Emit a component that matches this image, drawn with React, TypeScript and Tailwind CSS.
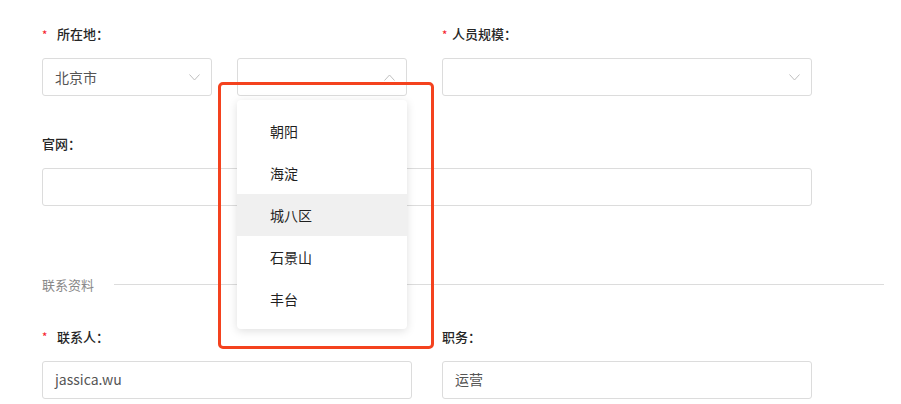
const font = { fontFamily: '"Noto Sans CJK SC", "Noto Sans", sans-serif' }

function Chevron({ up = false }: { up?: boolean }) {
  return (
    <svg width="11" height="7" viewBox="0 0 11 7" className="text-[#bfbfbf]">
      <path d={up ? 'M0.5 6.5 L5.5 1 L10.5 6.5' : 'M0.5 0.5 L5.5 6 L10.5 0.5'} fill="none" stroke="currentColor" strokeWidth="1" />
    </svg>
  )
}

function Label({ text, required = false, tight = false }: { text: string; required?: boolean; tight?: boolean }) {
  return (
    <div className="h-5 flex items-center text-[13px] font-medium text-[#262626]">
      {required && <span className={`text-[#f5222d] text-[11px] ${tight ? 'w-[10px]' : 'w-[15px]'}`}>*</span>}
      <span>{text}：</span>
    </div>
  )
}

function Select({ value, up = false, className = '' }: { value?: string; up?: boolean; className?: string }) {
  return (
    <div className={`h-[38px] border border-[#dcdcdc] rounded-[3px] bg-white flex items-center justify-between pl-3 pr-[11px] ${className}`}>
      <span className="text-[14px] text-[#555]">{value}</span>
      <Chevron up={up} />
    </div>
  )
}

function Input({ value, className = '' }: { value?: string; className?: string }) {
  return (
    <div className={`h-[38px] border border-[#dcdcdc] rounded-[3px] bg-white flex items-center px-3 text-[14px] text-[#555] ${className}`}>
      {value}
    </div>
  )
}

const districts = ['朝阳', '海淀', '城八区', '石景山', '丰台']

export default function App() {
  return (
    <div className="w-[901px] h-[404px] bg-white overflow-hidden pl-[42px] pt-6" style={font}>
      <div className="flex gap-[30px]">
        <div className="w-[370px]">
          <Label text="所在地" required />
          <div className="flex gap-[25px] mt-[14px]">
            <Select value="北京市" className="w-[170px]" />
            <div className="relative w-[170px]">
              <Select up className="w-[170px]" />
              <div className="absolute left-0 top-[42px] w-[170px] bg-white rounded-[4px] shadow-[0_2px_10px_rgba(0,0,0,0.13)] pt-[10px] pb-[9px] z-10">
                {districts.map((d) => (
                  <div key={d} className={`h-[42px] flex items-center pl-[33px] text-[14px] text-[#1f1f1f] ${d === '城八区' ? 'bg-[#f0f0f0]' : ''}`}>
                    {d}
                  </div>
                ))}
              </div>
              <div className="absolute left-[-19px] top-[24px] w-[216px] h-[267px] border-[3px] border-[#f4421e] rounded-[5px] z-20 pointer-events-none" />
            </div>
          </div>
        </div>
        <div className="w-[370px]">
          <Label text="人员规模" required tight />
          <Select className="mt-[14px]" />
        </div>
      </div>

      <div className="mt-[38px]">
        <Label text="官网" />
        <Input className="mt-[14px] w-[770px]" />
      </div>

      <div className="mt-[69px] flex items-center pr-[17px]">
        <span className="text-[13px] text-[#888]">联系资料</span>
        <div className="flex-1 h-px bg-[#dcdcdc] ml-[20px]" />
      </div>

      <div className="mt-[32px] flex gap-[30px]">
        <div className="w-[370px]">
          <Label text="联系人" required />
          <Input value="jassica.wu" className="mt-[14px]" />
        </div>
        <div className="w-[370px]">
          <Label text="职务" />
          <Input value="运营" className="mt-[14px]" />
        </div>
      </div>
    </div>
  )
}
